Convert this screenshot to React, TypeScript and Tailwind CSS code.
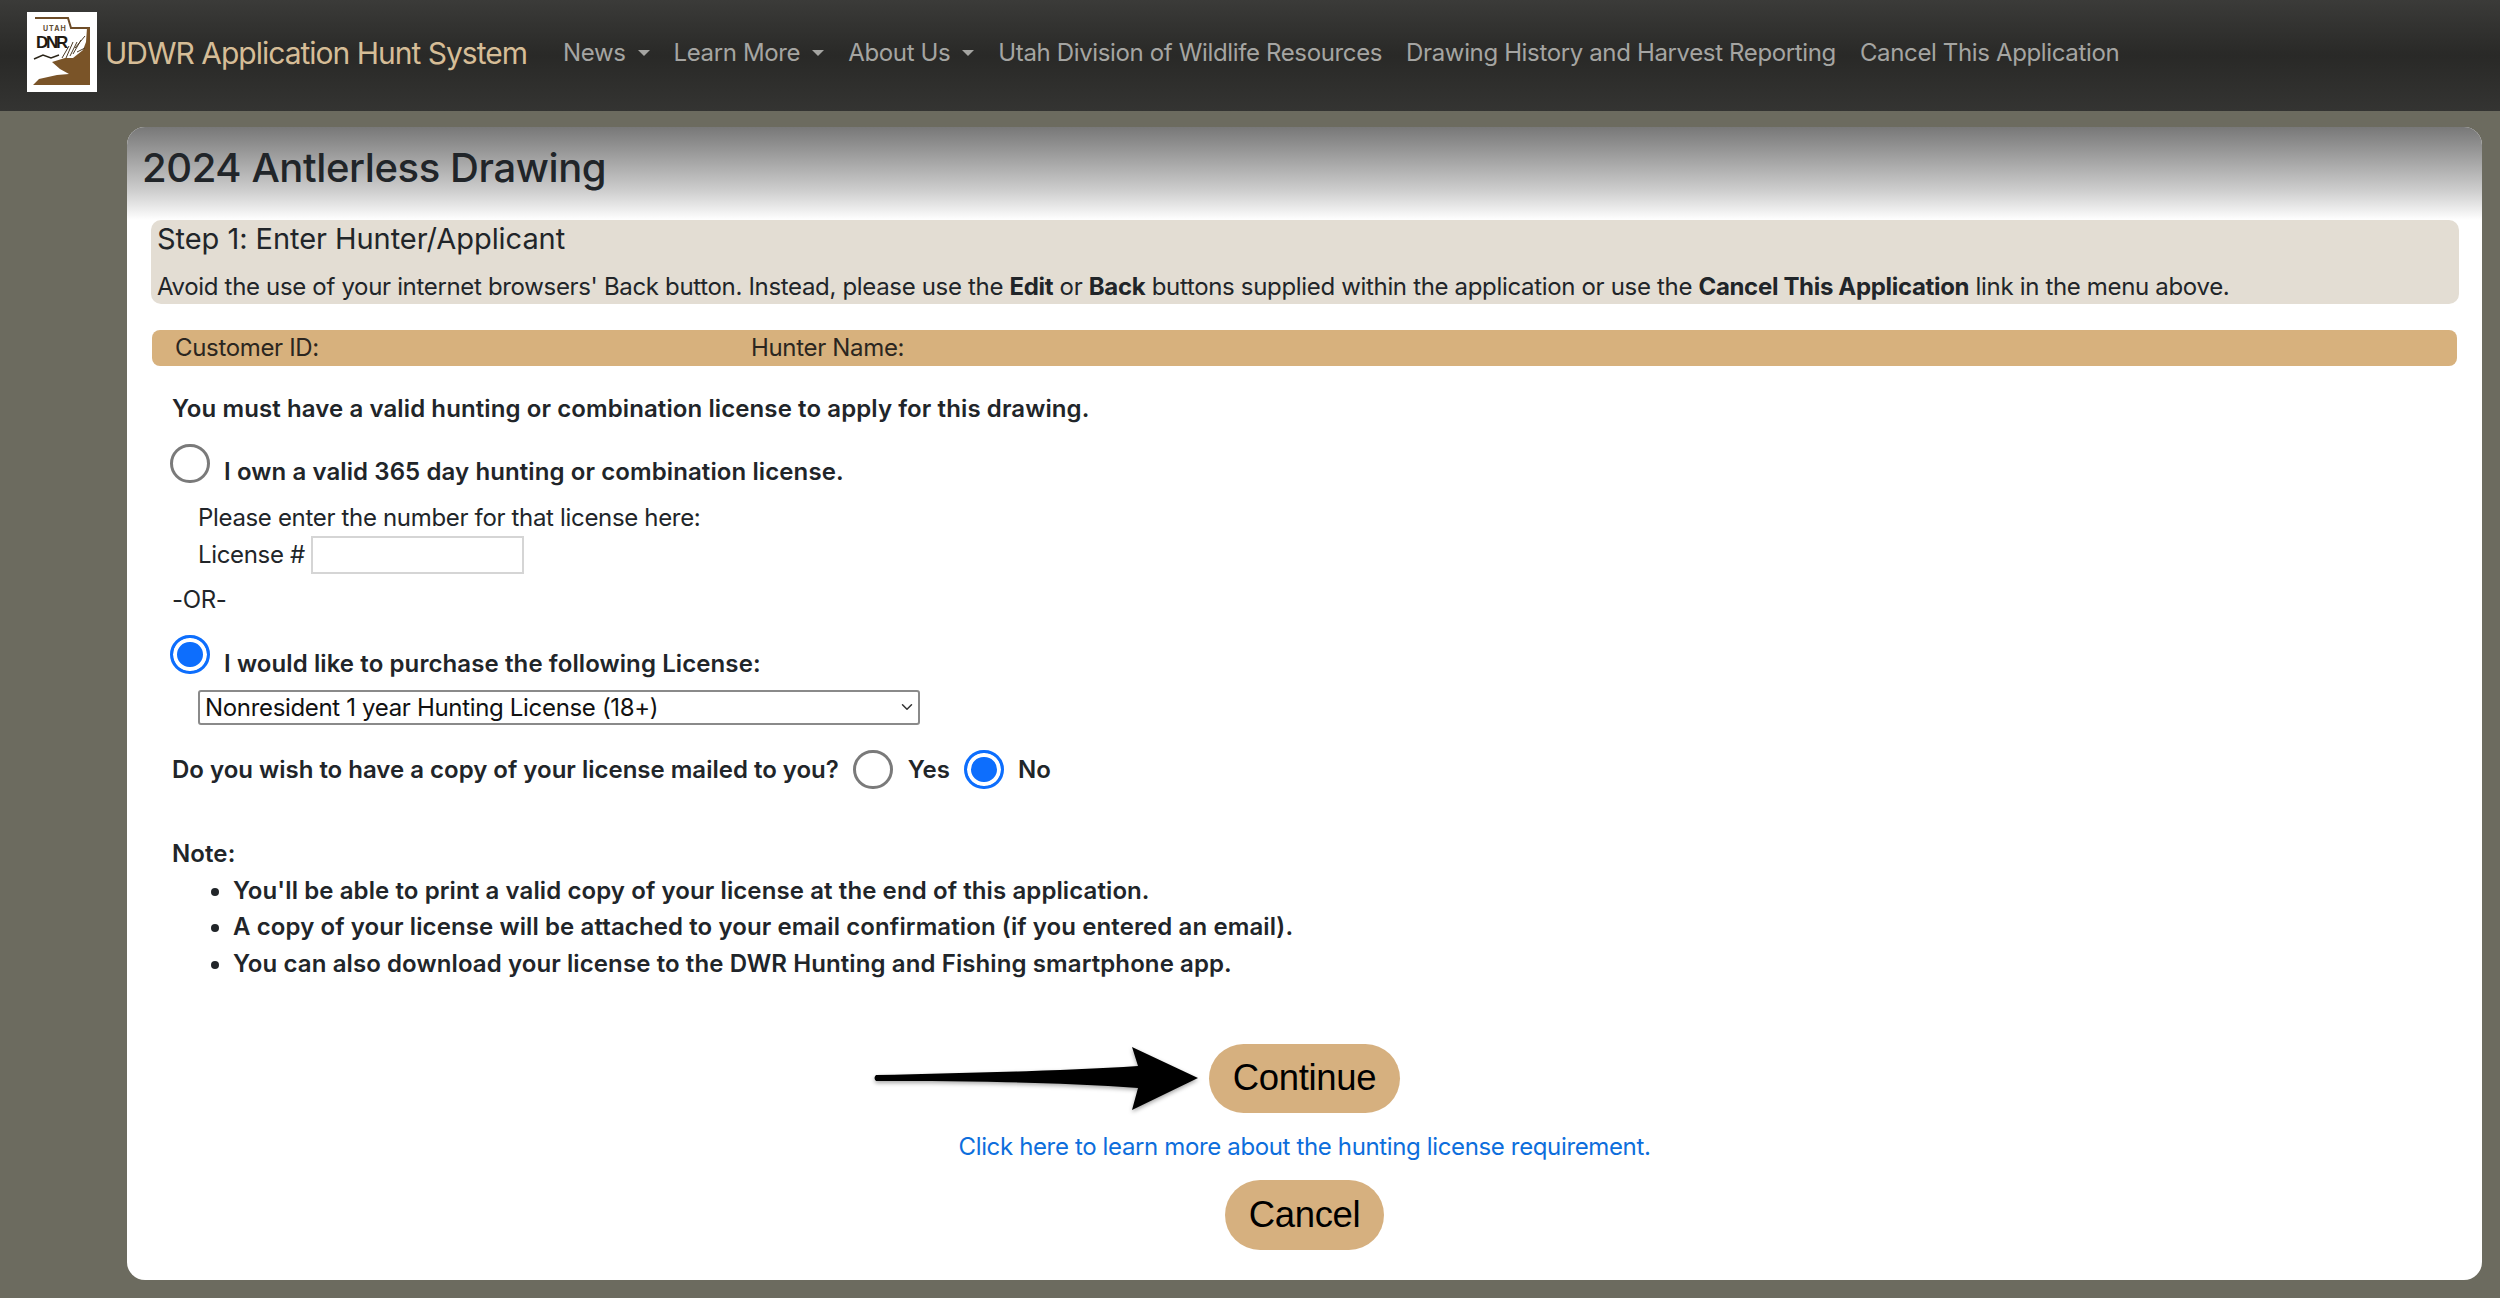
import { ChevronDown } from 'lucide-react';

const navLinks = [
  { name: 'News', caret: true },
  { name: 'Learn More', caret: true },
  { name: 'About Us', caret: true },
  { name: 'Utah Division of Wildlife Resources' },
  { name: 'Drawing History and Harvest Reporting' },
  { name: 'Cancel This Application' },
];

const notes = [
  "You'll be able to print a valid copy of your license at the end of this application.",
  'A copy of your license will be attached to your email confirmation (if you entered an email).',
  'You can also download your license to the DWR Hunting and Fishing smartphone app.',
];

const Logo = () => (
  <svg viewBox="0 0 70 80" className="w-[70px] h-[80px] shrink-0 bg-white">
    <path d="M8 6 H41 L44 16 H62 V70" fill="none" stroke="#6d4c28" strokeWidth="2" />
    <path d="M63 16 V73 H6 L12 67 L30 63 L42 62 L33 57 L25 50 L38 46 L46 46 L56 38 L59 30 L60 16 Z" fill="#7a5428" />
    <path d="M7 47 L16 43 L24 46 L32 43" fill="none" stroke="#2a2418" strokeWidth="1.5" />
    <path d="M35 46 L42 34 M39 46 L46 30 M43 44 L50 30 M46 42 L54 28 M50 40 L58 36 M48 36 L58 24" fill="none" stroke="#4b3a24" strokeWidth="1" />
    <text x="16" y="19" fontSize="7" fontWeight="700" letterSpacing="1" fill="#5c4a30" fontFamily="Inter, sans-serif">UTAH</text>
    <text x="9" y="36" fontSize="17" fontWeight="700" fill="#1f1a12" fontFamily="'Liberation Sans', sans-serif" textLength="32">DNR</text>
  </svg>
);

const Radio = ({ checked = false, name }: { checked?: boolean; name: string }) => (
  <input
    type="radio"
    name={name}
    defaultChecked={checked}
    className="appearance-none w-[40px] h-[39px] shrink-0 rounded-full border-[3px] border-[#7a7a7a] bg-white checked:border-[#0d6efd] checked:bg-[#0d6efd] checked:shadow-[inset_0_0_0_4px_#ffffff]"
  />
);

const PillButton = ({ label, className }: { label: string; className: string }) => (
  <button className={`rounded-[36px] bg-[#d6b07f] text-black text-[36.5px] font-['Liberation_Sans',sans-serif] flex items-center justify-center ${className}`}>
    {label}
  </button>
);

const Arrow = () => (
  <svg viewBox="0 0 330 70" className="absolute left-[746px] top-[917px] w-[330px] h-[70px] drop-shadow-[0_2px_2px_rgba(0,0,0,0.35)]">
    <path d="M3 31 C90 29 190 27 265 22 L259 3 L325 34 L259 66 L265 44 C190 38 90 37 3 37 Q0 34 3 31 Z" fill="#000000" />
  </svg>
);

export default function App() {
  return (
    <div className="w-[2500px] h-[1298px] overflow-hidden bg-[#6c6b5f] font-['Inter',sans-serif] text-[24px] tracking-[-0.33px] text-[#212529]">
      {/* Nav */}
      <nav className="h-[111px] bg-gradient-to-b from-[#3b3b39] via-[#292927] to-[#343432] flex items-start pl-[27px]">
        <div className="mt-[12px]"><Logo /></div>
        <span className="ml-[8px] mt-[33px] text-[30px] tracking-[-1px] leading-[40px] text-[#d6bd97]">UDWR Application Hunt System</span>
        <div className="flex ml-[36px] mt-[37px] gap-[24px] text-[#a5a5a2] leading-[32px] tracking-[-0.36px]">
          {navLinks.map((link) => (
            <span key={link.name} className="flex items-center">
              {link.name}
              {link.caret && <span className="ml-[12px] border-x-[6px] border-x-transparent border-t-[6px] border-t-[#a5a5a2]" />}
            </span>
          ))}
        </div>
      </nav>

      {/* Card */}
      <main className="relative mt-[16px] ml-[127px] w-[2355px] h-[1153px] rounded-[18px] bg-white overflow-hidden">
        <div className="h-[93px] bg-gradient-to-b from-[#787878] via-[#d0d0d0] via-70% to-white pl-[15px] pt-[14px]">
          <h1 className="text-[40px] tracking-[-0.4px] leading-[54px] font-medium">2024 Antlerless Drawing</h1>
        </div>

        <div className="ml-[24px] w-[2308px] h-[84px] rounded-[10px] bg-[#e3ddd3] pl-[6px]">
          <div className="text-[29px] tracking-[-0.05px] leading-[38px]">Step 1: Enter Hunter/Applicant</div>
          <p className="mt-[12px] leading-[34px]">
            Avoid the use of your internet browsers' Back button. Instead, please use the <b>Edit</b> or <b>Back</b> buttons supplied within the application or use the <b>Cancel This Application</b> link in the menu above.
          </p>
        </div>

        <div className="ml-[25px] mt-[26px] w-[2305px] h-[36px] rounded-[8px] bg-[#d7b17d] flex items-center pl-[23px] text-[#2b2620]">
          <span className="w-[576px]">Customer ID:</span>
          <span>Hunter Name:</span>
        </div>

        <div className="pl-[45px]">
          <p className="mt-[26px] font-semibold tracking-[0.1px] leading-[34px]">You must have a valid hunting or combination license to apply for this drawing.</p>

          <div className="flex items-end gap-[14px] mt-[18px] -ml-[2px]">
            <Radio name="own" />
            <span className="font-semibold tracking-[0.1px] leading-[34px] -mb-[6px]">I own a valid 365 day hunting or combination license.</span>
          </div>

          <div className="pl-[26px]">
            <p className="mt-[18px] leading-[34px]">Please enter the number for that license here:</p>
            <div className="flex items-center gap-[6px] mt-[1px]">
              <span>License #</span>
              <input className="w-[213px] h-[38px] bg-white border-2 border-[#d5d5d5]" />
            </div>
          </div>

          <p className="mt-[9px] leading-[34px]">-OR-</p>

          <div className="flex items-end gap-[14px] mt-[18px] -ml-[2px]">
            <Radio name="own" checked />
            <span className="font-semibold tracking-[0.1px] leading-[34px] -mb-[7px]">I would like to purchase the following License:</span>
          </div>

          <div className="relative ml-[26px] mt-[16px] w-[722px] h-[35px]">
            <select className="appearance-none block w-full h-full pl-[5px] rounded-[3px] border-2 border-[#8a8a8a] bg-white text-[#111] font-['Inter',sans-serif] text-[24px] tracking-[-0.33px] leading-[30px]">
              <option>Nonresident 1 year Hunting License (18+)</option>
            </select>
            <ChevronDown className="absolute right-[4px] top-[8px] w-[18px] h-[18px] text-[#333]" strokeWidth={2} />
          </div>

          <div className="flex items-center mt-[25px] font-semibold tracking-normal">
            <span>Do you wish to have a copy of your license mailed to you?</span>
            <span className="ml-[14px] flex"><Radio name="mail" /></span>
            <span className="ml-[15px]">Yes</span>
            <span className="ml-[14px] flex"><Radio name="mail" checked /></span>
            <span className="ml-[14px]">No</span>
          </div>

          <div className="mt-[47px] font-semibold tracking-[0.1px] leading-[36.5px]">
            <p>Note:</p>
            <ul className="list-disc pl-[61px]">
              {notes.map((note) => <li key={note}>{note}</li>)}
            </ul>
          </div>
        </div>

        {/* Buttons */}
        <div className="flex flex-col items-center mt-[62px]">
          <PillButton label="Continue" className="w-[191px] h-[69px]" />
          <a href="#" className="mt-[17px] text-[#0d6edc] leading-[34px] tracking-[-0.36px]">Click here to learn more about the hunting license requirement.</a>
          <PillButton label="Cancel" className="mt-[16px] w-[159px] h-[70px]" />
        </div>
        <Arrow />
      </main>
    </div>
  );
}
